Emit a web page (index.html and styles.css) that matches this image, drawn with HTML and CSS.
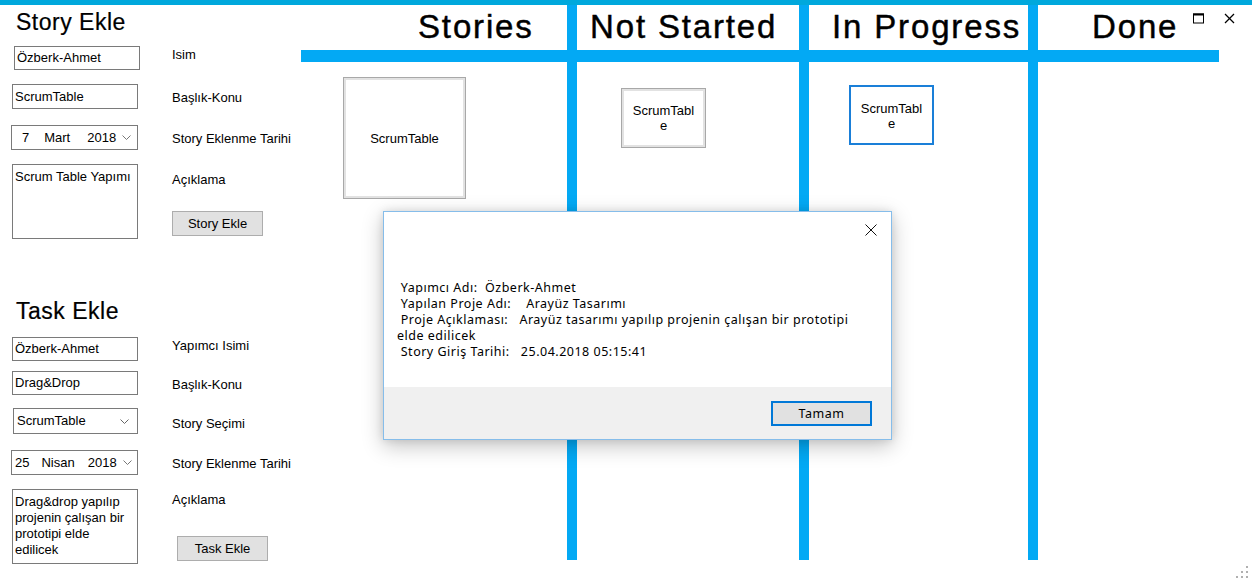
FILE: index.html
```html
<!DOCTYPE html>
<html lang="tr">
<head>
<meta charset="utf-8">
<title>Scrum Table</title>
<link rel="stylesheet" href="styles.css">
</head>
<body>
<div class="topbar"></div>
<div class="main">
  <aside class="panel">
    <section class="story">
      <h2 class="title">Story Ekle</h2>
      <div class="form">
        <div class="controls">
          <div class="box c1">Özberk-Ahmet</div>
          <div class="box c2">ScrumTable</div>
          <div class="box date c3"><span class="d">7</span><span class="m">Mart</span><span class="y">2018</span><svg class="chev" width="9" height="5" viewBox="0 0 9 5"><polyline points="0.5,0.5 4.5,4.5 8.5,0.5" fill="none" stroke="#777" stroke-width="1"/></svg></div>
          <div class="box area c4">Scrum Table Yapımı</div>
        </div>
        <div class="labels">
          <div class="lbl l1">Isim</div>
          <div class="lbl l2">Başlık-Konu</div>
          <div class="lbl l3">Story Eklenme Tarihi</div>
          <div class="lbl l4">Açıklama</div>
          <div class="btn b1">Story Ekle</div>
        </div>
      </div>
    </section>
    <section class="task">
      <h2 class="title">Task Ekle</h2>
      <div class="form">
        <div class="controls">
          <div class="box c1">Özberk-Ahmet</div>
          <div class="box c2">Drag&amp;Drop</div>
          <div class="box combo c3">ScrumTable<svg class="chev" width="9" height="5" viewBox="0 0 9 5"><polyline points="0.5,0.5 4.5,4.5 8.5,0.5" fill="none" stroke="#666" stroke-width="1"/></svg></div>
          <div class="box date c4"><span class="d">25</span><span class="m">Nisan</span><span class="y">2018</span><svg class="chev" width="9" height="5" viewBox="0 0 9 5"><polyline points="0.5,0.5 4.5,4.5 8.5,0.5" fill="none" stroke="#777" stroke-width="1"/></svg></div>
          <div class="box area c5">Drag&amp;drop yapılıp projenin çalışan bir prototipi elde edilicek</div>
        </div>
        <div class="labels">
          <div class="lbl l1">Yapımcı Isimi</div>
          <div class="lbl l2">Başlık-Konu</div>
          <div class="lbl l3">Story Seçimi</div>
          <div class="lbl l4">Story Eklenme Tarihi</div>
          <div class="lbl l5">Açıklama</div>
          <div class="btn b2">Task Ekle</div>
        </div>
      </div>
    </section>
  </aside>

  <div class="board">
    <div class="head h1">Stories</div>
    <div class="head h2">Not Started</div>
    <div class="head h3">In Progress</div>
    <div class="head h4">Done</div>
    <div class="hbar"></div>
    <div class="vbar v1"></div>
    <div class="vbar v2"></div>
    <div class="vbar v3"></div>
    <div class="cell col1"><div class="card card1">ScrumTable</div></div>
    <div class="cell col2"><div class="card card2">ScrumTable</div></div>
    <div class="cell col3"><div class="card card3">ScrumTable</div></div>
    <div class="cell col4"></div>
  </div>
</div>

<div class="winctl">
  <svg class="maxi" width="11" height="11" viewBox="0 0 11 11"><rect x="0.5" y="1" width="10" height="9" fill="none" stroke="#000" stroke-width="1"/><line x1="0" y1="1.5" x2="11" y2="1.5" stroke="#000" stroke-width="2"/></svg>
  <svg class="closex" width="11" height="11" viewBox="0 0 11 11"><line x1="1" y1="1" x2="10" y2="10" stroke="#000" stroke-width="1.3"/><line x1="10" y1="1" x2="1" y2="10" stroke="#000" stroke-width="1.3"/></svg>
</div>

<svg class="grip" width="13" height="13" viewBox="0 0 13 13">
  <rect x="10" y="0" width="2" height="2" fill="#b0b0b0"/>
  <rect x="5" y="5" width="2" height="2" fill="#b0b0b0"/>
  <rect x="10" y="5" width="2" height="2" fill="#b0b0b0"/>
  <rect x="0" y="10" width="2" height="2" fill="#b0b0b0"/>
  <rect x="5" y="10" width="2" height="2" fill="#b0b0b0"/>
  <rect x="10" y="10" width="2" height="2" fill="#b0b0b0"/>
</svg>

<div class="dialog">
  <div class="dlg-body">
    <svg class="dlg-close" width="12" height="12" viewBox="0 0 12 12"><line x1="0.5" y1="0.5" x2="11.5" y2="11.5" stroke="#111" stroke-width="1"/><line x1="11.5" y1="0.5" x2="0.5" y2="11.5" stroke="#111" stroke-width="1"/></svg>
    <div class="dlg-msg"> Yapımcı Adı:  Özberk-Ahmet
 Yapılan Proje Adı:    Arayüz Tasarımı
 Proje Açıklaması:   Arayüz tasarımı yapılıp projenin çalışan bir prototipi
elde edilicek
 Story Giriş Tarihi:   25.04.2018 05:15:41</div>
  </div>
  <div class="dlg-foot">
    <div class="dlg-btn">Tamam</div>
  </div>
</div>
</body>
</html>
```

FILE: styles.css
```css
* { box-sizing: border-box; }
html, body { margin: 0; padding: 0; }
body {
  width: 1252px;
  height: 580px;
  overflow: hidden;
  position: relative;
  background: #fff;
  color: #000;
  font-family: "Liberation Sans", Arial, sans-serif;
  font-size: 13px;
}

.topbar { height: 5px; background: #00a8dc; }
.main { display: flex; }

/* ---------- left panel ---------- */
.panel { width: 301px; flex: none; }
.title {
  margin: 4px 0 0 16px;
  height: 26px;
  font-size: 23px;
  line-height: 26px;
  font-weight: normal;
  letter-spacing: 0.5px;
  -webkit-text-stroke: 0.2px #000;
}
.task .title { margin-top: 59px; }

.form { display: flex; }
.controls { display: flex; flex-direction: column; margin-left: 12px; width: 128px; flex: none; }
.labels { display: flex; flex-direction: column; align-items: flex-start; margin-left: 32px; }
.lbl { line-height: 16px; white-space: nowrap; }

.box {
  width: 126px;
  height: 24px;
  border: 1px solid #7a7a7a;
  background: #fff;
  display: flex;
  align-items: center;
  padding: 0 2px;
  line-height: 16px;
  white-space: nowrap;
}
.area {
  align-items: flex-start;
  white-space: normal;
  padding: 4px 6px 0 2px;
}
.chev { flex: none; }

.date .d { margin-left: 8px; }
.date .m { margin-left: 15px; }
.date .y { margin-left: 17px; }
.date .chev { margin-left: 6px; }
.task .date .d { margin-left: 1px; }
.task .date .m { margin-left: 12px; }
.task .date .y { margin-left: 13px; }

.combo { padding-left: 3px; }
.combo .chev { margin-left: auto; margin-right: 6px; }

.btn {
  width: 91px;
  height: 25px;
  background: #e1e1e1;
  border: 1px solid #adadad;
  display: flex;
  align-items: center;
  justify-content: center;
}

/* story rows */
.story .c1 { margin-top: 11px; margin-left: 2px; }
.story .c2 { margin-top: 14px; height: 25px; }
.story .c3 { margin-top: 16px; margin-left: -1px; width: 127px; height: 25px; }
.story .c4 { margin-top: 14px; height: 75px; }
.story .l1 { margin-top: 12px; }
.story .l2 { margin-top: 27px; }
.story .l3 { margin-top: 25px; }
.story .l4 { margin-top: 25px; }
.story .b1 { margin-top: 23px; }

/* task rows */
.task .c1 { margin-top: 13px; }
.task .c2 { margin-top: 10px; }
.task .c3 { margin-top: 13px; margin-left: 1px; width: 125px; height: 26px; }
.task .c4 { margin-top: 16px; margin-left: -1px; width: 127px; height: 25px; }
.task .c5 { margin-top: 14px; height: 75px; }
.task .l1 { margin-top: 14px; }
.task .l2 { margin-top: 23px; }
.task .l3 { margin-top: 23px; }
.task .l4 { margin-top: 24px; }
.task .l5 { margin-top: 20px; }
.task .b2 { margin-top: 28px; margin-left: 5px; }

/* ---------- board ---------- */
.board {
  display: grid;
  grid-template-columns: 266px 10px 222px 10px 219px 10px 181px;
  grid-template-rows: 45px 12px 498px;
}
.head {
  grid-row: 1;
  font-size: 33px;
  line-height: 44px;
  letter-spacing: 1.85px;
  white-space: nowrap;
  -webkit-text-stroke: 0.45px #000;
}
.h1 { grid-column: 1; padding-left: 117px; }
.h2 { grid-column: 3; padding-left: 13px; }
.h3 { grid-column: 5; padding-left: 23px; }
.h4 { grid-column: 7; padding-left: 54px; }

.hbar { grid-column: 1 / -1; grid-row: 2; background: #03a9f4; }
.vbar { grid-row: 1 / 4; background: #03a9f4; }
.v1 { grid-column: 2; }
.v2 { grid-column: 4; }
.v3 { grid-column: 6; }

.cell { grid-row: 3; }
.col1 { grid-column: 1; }
.col2 { grid-column: 3; }
.col3 { grid-column: 5; }
.col4 { grid-column: 7; }

.card {
  display: flex;
  justify-content: center;
  text-align: center;
  line-height: 15px;
  word-break: break-all;
  background: #fff;
}
.card1, .card2 {
  border: 1px solid #a8a8a8;
  box-shadow: inset 0 0 0 2px #e2e2e2;
}
.card1 { width: 123px; height: 122px; margin: 15px 0 0 42px; align-items: center; }
.card2 { width: 85px; height: 60px; margin: 26px 0 0 44px; align-items: flex-start; padding: 14px 8px 0; }
.card3 {
  width: 85px; height: 60px; margin: 23px 0 0 40px;
  align-items: flex-start; padding: 14px 8px 0;
  border: 2px solid #1a7fd8;
}

/* ---------- window chrome ---------- */
.winctl {
  position: absolute;
  top: 13px;
  left: 1193px;
  display: flex;
  gap: 20px;
}
.grip { position: absolute; left: 1236px; top: 566px; }

/* ---------- message box ---------- */
.dialog {
  position: absolute;
  left: 383px;
  top: 211px;
  width: 509px;
  height: 229px;
  border: 1px solid #86bdea;
  background: #fff;
  box-shadow: 0 6px 20px rgba(0, 0, 0, 0.24), 0 0 8px rgba(0, 0, 0, 0.10);
  display: flex;
  flex-direction: column;
  font-family: "Noto Sans", "Open Sans", sans-serif;
  font-size: 12.5px;
  letter-spacing: 0.5px;
  color: #000;
}
.dlg-body { height: 175px; flex: none; display: flex; flex-direction: column; }
.dlg-close { align-self: flex-end; margin: 12px 14px 0 0; }
.dlg-msg { margin: 44px 0 0 13px; white-space: pre; line-height: 16px; }
.dlg-foot {
  flex: 1;
  background: #f0f0f0;
  display: flex;
  justify-content: flex-end;
  align-items: flex-start;
  padding: 14px 19px 0 0;
}
.dlg-btn {
  width: 101px;
  height: 25px;
  border: 2px solid #0078d7;
  background: #e1e1e1;
  display: flex;
  align-items: center;
  justify-content: center;
}
```
